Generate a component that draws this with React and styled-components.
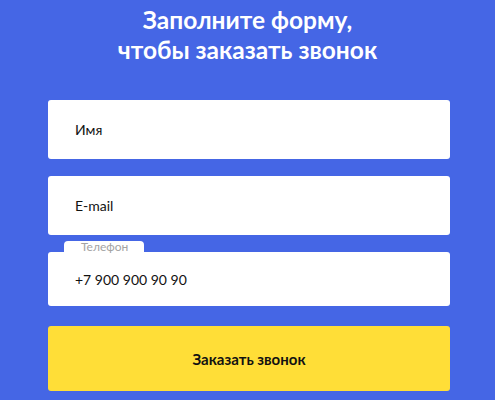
import React from 'react'
import styled, { createGlobalStyle } from 'styled-components'

const GlobalStyle = createGlobalStyle`
  html, body {
    margin: 0;
    padding: 0;
    background: #4566e5;
  }
  * {
    box-sizing: border-box;
  }
`

function App () {
  return (
    <>
      <GlobalStyle />
      <Page>
        <Title>
          Заполните форму,
          <br />
          чтобы заказать звонок
        </Title>
        <Form>
          <Field>
            <Input placeholder='Имя' />
          </Field>
          <Field>
            <Input placeholder='E-mail' />
          </Field>
          <Field $labelled>
            <Label>Телефон</Label>
            <Input $short defaultValue='+7 900 900 90 90' />
          </Field>
          <Button>Заказать звонок</Button>
        </Form>
      </Page>
    </>
  )
}

export default App

const Page = styled.div`
  width: 495px;
  height: 400px;
  background: #4566e5;
  font-family: Lato, 'Noto Sans', sans-serif;
  padding-top: 5px;
  overflow: hidden;
`

const Title = styled.h1`
  margin: 0;
  color: #ffffff;
  font-size: 24.5px;
  line-height: 30px;
  font-weight: 700;
  text-align: center;
`

const Form = styled.form`
  width: 402px;
  margin: 35px 0 0 48px;
  display: flex;
  flex-direction: column;
`

const Field = styled.div`
  position: relative;
  margin-bottom: ${p => (p.$labelled ? '20px' : '17px')};
`

const Label = styled.span`
  position: absolute;
  left: 16px;
  top: -11px;
  width: 80px;
  height: 12px;
  padding-left: 17px;
  background: #ffffff;
  border-radius: 4px 4px 0 0;
  color: #a3a3a3;
  font-size: 12px;
  line-height: 12px;
`

const Input = styled.input`
  display: block;
  width: 100%;
  height: ${p => (p.$short ? '54px' : '59px')};
  border: none;
  border-radius: 3px;
  background: #ffffff;
  padding: 0 0 0 27px;
  font-family: Lato, 'Noto Sans', sans-serif;
  font-size: 14px;
  color: #111111;
  outline: none;

  &::placeholder {
    color: #111111;
  }
`

const Button = styled.button`
  height: 65px;
  border: none;
  border-radius: 3px;
  background: #ffde37;
  color: #111111;
  font-family: Lato, 'Noto Sans', sans-serif;
  font-size: 15px;
  font-weight: 700;
  cursor: pointer;
`
